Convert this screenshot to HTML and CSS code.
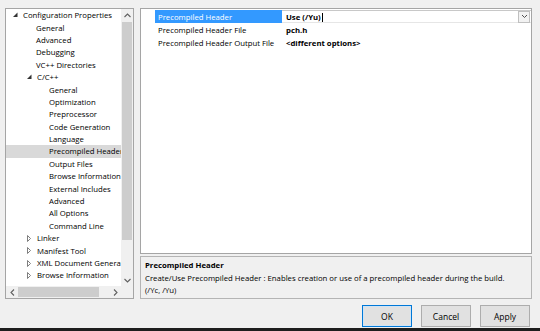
FILE: index.html
```html
<!DOCTYPE html>
<html lang="en">
<head>
    <meta charset="UTF-8">
    <title>Property Pages</title>
    <link rel="stylesheet" href="styles.css">
</head>
<body>
    <div class="dialog">
        <div class="main">
            <div class="tree">
                <div class="tree-body">
                    <div class="tree-items">
                        <div class="row lvl0"><svg class="exp" width="10" height="6" viewBox="0 0 10 6"><path d="M4.5 0.5 L4.5 5 L0 5 Z" fill="#333"/></svg>Configuration Properties</div>
                        <div class="row lvl1">General</div>
                        <div class="row lvl1">Advanced</div>
                        <div class="row lvl1">Debugging</div>
                        <div class="row lvl1">VC++ Directories</div>
                        <div class="row lvl1"><svg class="exp" width="10" height="6" viewBox="0 0 10 6"><path d="M4.5 0.5 L4.5 5 L0 5 Z" fill="#333"/></svg>C/C++</div>
                        <div class="row lvl2">General</div>
                        <div class="row lvl2">Optimization</div>
                        <div class="row lvl2">Preprocessor</div>
                        <div class="row lvl2">Code Generation</div>
                        <div class="row lvl2">Language</div>
                        <div class="row lvl2 selected">Precompiled Header</div>
                        <div class="row lvl2">Output Files</div>
                        <div class="row lvl2">Browse Information</div>
                        <div class="row lvl2">External Includes</div>
                        <div class="row lvl2">Advanced</div>
                        <div class="row lvl2">All Options</div>
                        <div class="row lvl2">Command Line</div>
                        <div class="row lvl1"><svg class="exp" width="10" height="7" viewBox="0 0 10 7"><path d="M0.5 0.5 L3.5 3.5 L0.5 6.5 Z" fill="none" stroke="#707070" stroke-width="0.9"/></svg>Linker</div>
                        <div class="row lvl1"><svg class="exp" width="10" height="7" viewBox="0 0 10 7"><path d="M0.5 0.5 L3.5 3.5 L0.5 6.5 Z" fill="none" stroke="#707070" stroke-width="0.9"/></svg>Manifest Tool</div>
                        <div class="row lvl1"><svg class="exp" width="10" height="7" viewBox="0 0 10 7"><path d="M0.5 0.5 L3.5 3.5 L0.5 6.5 Z" fill="none" stroke="#707070" stroke-width="0.9"/></svg>XML Document Generator</div>
                        <div class="row lvl1"><svg class="exp" width="10" height="7" viewBox="0 0 10 7"><path d="M0.5 0.5 L3.5 3.5 L0.5 6.5 Z" fill="none" stroke="#707070" stroke-width="0.9"/></svg>Browse Information</div>
                    </div>
                    <div class="vscroll">
                        <div class="arrow">
                            <svg width="7" height="5" viewBox="0 0 7 5"><path d="M0.5 4 L3.5 1 L6.5 4" fill="none" stroke="#606060" stroke-width="1.1"/></svg>
                        </div>
                        <div class="vtrack"><div class="vthumb"></div></div>
                        <div class="arrow">
                            <svg width="7" height="5" viewBox="0 0 7 5"><path d="M0.5 1 L3.5 4 L6.5 1" fill="none" stroke="#606060" stroke-width="1.1"/></svg>
                        </div>
                    </div>
                </div>
                <div class="hscroll">
                    <div class="harrow">
                        <svg width="5" height="7" viewBox="0 0 5 7"><path d="M4 0.5 L1 3.5 L4 6.5" fill="none" stroke="#606060" stroke-width="1.1"/></svg>
                    </div>
                    <div class="htrack"><div class="hthumb"></div></div>
                    <div class="harrow">
                        <svg width="5" height="7" viewBox="0 0 5 7"><path d="M1 0.5 L4 3.5 L1 6.5" fill="none" stroke="#606060" stroke-width="1.1"/></svg>
                    </div>
                    <div class="corner"></div>
                </div>
            </div>

            <div class="right">
                <div class="grid">
                    <div class="prop active">
                        <div class="prop-name">Precompiled Header</div>
                        <div class="prop-value editor">
                            <span class="edit-text">Use (/Yu)<span class="caret"></span></span>
                            <span class="drop">
                                <svg width="7" height="5" viewBox="0 0 7 5"><path d="M1 1 L3.5 3.5 L6 1" fill="none" stroke="#505050" stroke-width="1"/></svg>
                            </span>
                        </div>
                    </div>
                    <div class="prop">
                        <div class="prop-name">Precompiled Header File</div>
                        <div class="prop-value">pch.h</div>
                    </div>
                    <div class="prop">
                        <div class="prop-name">Precompiled Header Output File</div>
                        <div class="prop-value">&lt;different options&gt;</div>
                    </div>
                </div>
                <div class="desc">
                    <div class="desc-title">Precompiled Header</div>
                    <div class="desc-text">Create/Use Precompiled Header : Enables creation or use of a precompiled header during the build.<br>(/Yc, /Yu)</div>
                </div>
            </div>
        </div>

        <div class="buttons">
            <button class="btn default">OK</button>
            <button class="btn">Cancel</button>
            <button class="btn">Apply</button>
        </div>
        <div class="taskbar"></div>
    </div>
</body>
</html>
```

FILE: styles.css
```css
body {
    margin: 0;
    width: 540px;
    height: 331px;
    overflow: hidden;
    background-color: #f0f0f0;
    font-family: "Open Sans", "Noto Sans", sans-serif;
    font-size: 7.75px;
    color: #000;
}

.dialog {
    display: flex;
    flex-direction: column;
    height: 331px;
}

.main {
    display: flex;
    gap: 6px;
    padding: 8px 8px 0 5px;
    height: 291px;
}

/* left tree */
.tree {
    width: 127px;
    border: 1px solid #a5a5a5;
    background: #fff;
    display: flex;
    flex-direction: column;
}

.tree-body {
    flex: 1;
    display: flex;
    min-height: 0;
}

.tree-items {
    flex: 1;
    overflow: hidden;
    white-space: nowrap;
}

.row {
    height: 12.4px;
    display: flex;
    align-items: center;
}

.lvl0 { padding-left: 7px; }
.lvl1 { padding-left: 30px; }
.lvl1 .exp { margin-left: -9px; }
.lvl2 { padding-left: 43px; }

.row.selected {
    background: #d9d9d9;
}

.exp {
    flex: none;
    width: 10px;
}

.vscroll {
    width: 12px;
    background: #f0f0f0;
    display: flex;
    flex-direction: column;
}

.arrow {
    height: 12px;
    display: flex;
    align-items: center;
    justify-content: center;
}

.vtrack {
    flex: 1;
    padding: 1px 1px;
}

.vthumb {
    height: 218px;
    background: #cdcdcd;
}

.hscroll {
    height: 12px;
    display: flex;
    background: #f0f0f0;
}

.harrow {
    width: 12px;
    display: flex;
    align-items: center;
    justify-content: center;
}

.htrack {
    flex: 1;
    padding: 1px 0;
}

.hthumb {
    width: 81px;
    height: 100%;
    background: #cdcdcd;
}

.corner {
    width: 12px;
}

/* right side */
.right {
    flex: 1;
    display: flex;
    flex-direction: column;
    gap: 2px;
}

.grid {
    height: 246px;
    border: 1px solid #a5a5a5;
    background: #fff;
    padding: 1px 0 0 14px;
}

.prop {
    display: flex;
    height: 13px;
    align-items: center;
}

.prop-name {
    width: 124px;
    padding-left: 3px;
    height: 100%;
    display: flex;
    align-items: center;
    white-space: nowrap;
}

.prop.active .prop-name {
    background: #3399ff;
    color: #fff;
}

.prop-value {
    flex: 1;
    padding-left: 4px;
    font-weight: bold;
    height: 100%;
    display: flex;
    align-items: center;
}

.editor {
    border-top: 1px solid #c8c8c8;
    border-bottom: 1px solid #e6e6e6;
    justify-content: space-between;
    padding-right: 1px;
    box-sizing: border-box;
}

.caret {
    display: inline-block;
    width: 1px;
    height: 9px;
    background: #000;
    vertical-align: -2px;
    margin-left: 1px;
}

.drop {
    width: 10px;
    height: 10px;
    border: 1px solid #c0c0c0;
    background: #f2f2f2;
    display: flex;
    align-items: center;
    justify-content: center;
}

.desc {
    height: 39px;
    border: 1px solid #b4b4b4;
    padding: 3px 4px 0;
    line-height: 11.5px;
}

.desc-title {
    font-weight: bold;
    margin-bottom: 2px;
}

/* buttons */
.buttons {
    display: flex;
    justify-content: flex-end;
    gap: 9px;
    padding: 6px 10px 0 0;
}

.btn {
    width: 50px;
    height: 22px;
    margin: 0;
    padding: 0;
    font-family: inherit;
    font-size: 8.5px;
    color: #000;
    background: #e1e1e1;
    border: 1px solid #adadad;
}

.btn.default {
    border: 1px solid #0078d7;
    box-shadow: inset 0 0 0 1px #d0e4f5;
}

.taskbar {
    margin-top: auto;
    height: 3px;
    background: #1e1e1e;
}
```
